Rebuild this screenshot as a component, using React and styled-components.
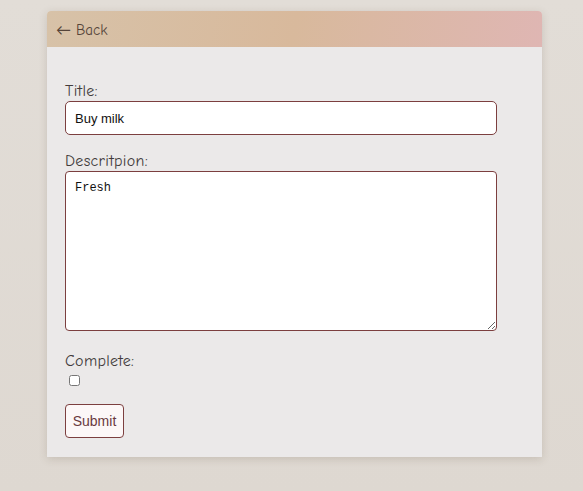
import React, { useState } from "react";
import styled, { createGlobalStyle } from "styled-components";

const GlobalStyle = createGlobalStyle`
  html, body {
    margin: 0;
    padding: 0;
    background: #e1dcd6;
    height: 100%;
  }
  body {
    font-family: "Liberation Sans", Arial, sans-serif;
  }
`;

const Page = styled.div`
  width: 583px;
  height: 491px;
  padding: 11px 0 0 47px;
  box-sizing: border-box;
  background: linear-gradient(180deg, #e2ddd7 0%, #ded8d1 100%);
`;

const Card = styled.div`
  width: 495px;
  background: #ebe9e9;
  border-radius: 4px 4px 0 0;
  box-shadow: 0 2px 8px rgba(90, 70, 50, 0.18);
  overflow: hidden;
`;

const Header = styled.div`
  height: 36px;
  display: flex;
  align-items: center;
  padding-left: 9px;
  background: linear-gradient(100deg, #d7c2a8 0%, #d8b99c 50%, #dfb6b3 100%);
`;

const BackLink = styled.a`
  font-family: "Comic Neue", "Lato", "DejaVu Sans", sans-serif;
  font-size: 15px;
  color: #554439;
  text-decoration: none;
  cursor: pointer;
`;

const Form = styled.form`
  padding: 35px 18px 19px 18px;
  display: flex;
  flex-direction: column;
`;

const Field = styled.div`
  display: flex;
  flex-direction: column;
  margin-bottom: ${(p) => p.$gap || 0}px;
`;

const Label = styled.label`
  font-family: "Comic Neue", "Lato", "DejaVu Sans", sans-serif;
  font-size: 16px;
  letter-spacing: 0.3px;
  color: #423c3c;
  line-height: 18px;
  margin-bottom: 1px;
`;

const TextInput = styled.input`
  width: 432px;
  height: 34px;
  box-sizing: border-box;
  border: 1px solid #7c3f3f;
  border-radius: 5px;
  padding: 0 9px;
  font-family: "Liberation Sans", Arial, sans-serif;
  font-size: 13px;
  color: #111;
  background: #fff;
  outline: none;
`;

const TextArea = styled.textarea`
  width: 432px;
  height: 160px;
  box-sizing: border-box;
  border: 1px solid #7c3f3f;
  border-radius: 4px;
  padding: 9px 9px;
  font-family: "Liberation Mono", "DejaVu Sans Mono", monospace;
  font-size: 12px;
  color: #111;
  background: #fff;
  outline: none;
  resize: both;
`;

const Check = styled.input`
  width: 11px;
  height: 11px;
  margin: 4px 0 0 4px;
`;

const SubmitButton = styled.button`
  align-self: flex-start;
  width: 59px;
  height: 34px;
  border: 1px solid #7c3f3f;
  border-radius: 4px;
  background: #fcf7f7;
  color: #6a3a3e;
  font-family: "Liberation Sans", Arial, sans-serif;
  font-size: 14px;
  cursor: pointer;
`;

export default function App() {
  const [title, setTitle] = useState("Buy milk");
  const [desc, setDesc] = useState("Fresh");
  const [done, setDone] = useState(false);

  return (
    <>
      <GlobalStyle />
      <Page>
        <Card>
          <Header>
            <BackLink>← Back</BackLink>
          </Header>
          <Form onSubmit={(e) => e.preventDefault()}>
            <Field $gap={17}>
              <Label htmlFor="title">Title:</Label>
              <TextInput id="title" value={title} onChange={(e) => setTitle(e.target.value)} />
            </Field>
            <Field $gap={21}>
              <Label htmlFor="desc">Descritpion:</Label>
              <TextArea id="desc" value={desc} onChange={(e) => setDesc(e.target.value)} />
            </Field>
            <Field $gap={18}>
              <Label htmlFor="done">Complete:</Label>
              <Check id="done" type="checkbox" checked={done} onChange={(e) => setDone(e.target.checked)} />
            </Field>
            <SubmitButton type="submit">Submit</SubmitButton>
          </Form>
        </Card>
      </Page>
    </>
  );
}
